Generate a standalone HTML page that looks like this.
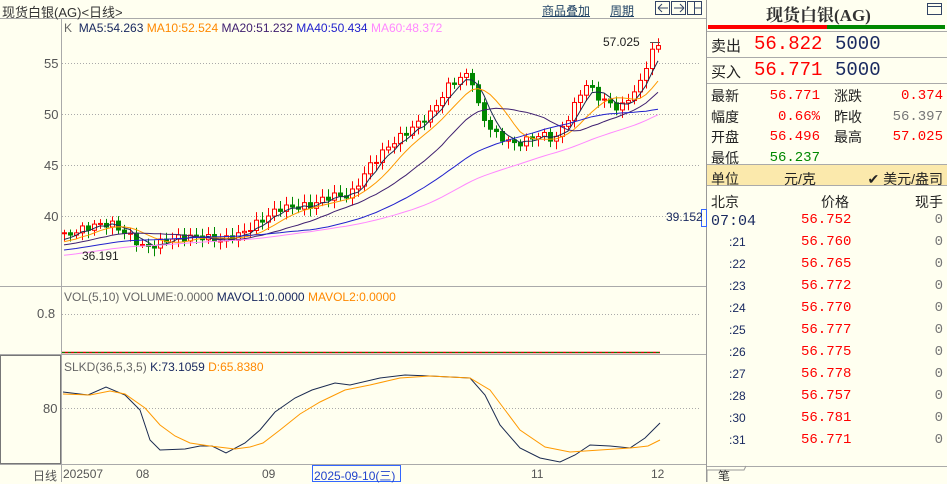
<!DOCTYPE html>
<html><head><meta charset="utf-8"><style>
*{margin:0;padding:0;box-sizing:border-box}
body{width:947px;height:482px;background:#fffff0;font-family:"Liberation Sans","Noto Sans CJK SC",sans-serif;font-size:12px;position:relative;overflow:hidden;color:#333}
.a{position:absolute;white-space:nowrap}
.m{font-family:"Liberation Mono","Noto Sans CJK SC",monospace}
.r{color:#f00}.n{color:#1a2a60}
</style></head><body>
<svg class="a" style="left:0;top:0" width="947" height="482" id="s">
<line x1="0" y1="18.5" x2="706" y2="18.5" stroke="#aaa"/>
<line x1="61.5" y1="18" x2="61.5" y2="482" stroke="#aaa"/>
<line x1="0" y1="286.5" x2="706" y2="286.5" stroke="#aaa"/>
<line x1="0" y1="354.5" x2="706" y2="354.5" stroke="#aaa"/>
<line x1="0" y1="464.5" x2="706" y2="464.5" stroke="#aaa"/>
<rect x="0.5" y="355.5" width="60" height="108" fill="none" stroke="#777"/>
<line x1="706.5" y1="0" x2="706.5" y2="482" stroke="#999"/>
<g stroke="#aaa" stroke-dasharray="1,2">
<line x1="62" y1="63.5" x2="700" y2="63.5"/><line x1="62" y1="114.5" x2="700" y2="114.5"/><line x1="62" y1="165.5" x2="700" y2="165.5"/><line x1="62" y1="216.5" x2="700" y2="216.5"/>
<line x1="62" y1="314.5" x2="700" y2="314.5"/><line x1="62" y1="408.5" x2="700" y2="408.5"/>
</g>
<line x1="62" y1="352.5" x2="660" y2="352.5" stroke="#c00" stroke-width="1.5"/>
<line x1="62" y1="352.5" x2="660" y2="352.5" stroke="#080" stroke-dasharray="3,3"/>
<polyline fill="none" stroke="#1a2a50" stroke-width="1" points="63,392 88,395 106,387 125,395 140,410 150,440 160,450 185,449 200,446 212,446 226,453 245,443 260,430 275,412 295,398 312,390 335,383 350,385 380,378 405,375 430,376 470,378 485,395 500,425 520,448 540,458 560,462 575,455 590,445 610,446 630,448 645,438 660,423"/>
<polyline fill="none" stroke="#f90" stroke-width="1" points="63,394 90,395 110,391 125,394 145,408 160,425 175,436 190,443 210,446 235,449 250,447 263,443 280,430 300,414 320,402 345,390 370,385 400,378 430,376 470,378 490,390 505,410 520,430 545,447 570,452 600,450 630,448 648,446 660,440"/>
<g id="c"></g>
<line x1="650" y1="42.5" x2="660" y2="42.5" stroke="#555"/>
<rect x="708" y="25" width="119" height="4" fill="#f00"/><rect x="827" y="25" width="118" height="4" fill="#080"/>
<line x1="707" y1="31.5" x2="947" y2="31.5" stroke="#aaa"/>
<line x1="707" y1="57.5" x2="947" y2="57.5" stroke="#aaa"/>
<line x1="707" y1="83.5" x2="947" y2="83.5" stroke="#aaa"/>
<rect x="707" y="165" width="240" height="20" fill="#fbe9ac"/>
<line x1="707" y1="164.5" x2="947" y2="164.5" stroke="#aaa"/>
<line x1="707" y1="185.5" x2="947" y2="185.5" stroke="#aaa"/>
<line x1="707" y1="466.5" x2="947" y2="466.5" stroke="#aaa"/>
<path d="M707 482V470h37l2 -4" fill="none" stroke="#999"/>
<rect x="927.5" y="3.5" width="14" height="11" fill="none" stroke="#346"/><line x1="928" y1="6.5" x2="941" y2="6.5" stroke="#346"/>
<g fill="none" stroke="#346"><rect x="655.5" y="1.5" width="14" height="13"/><rect x="671.5" y="1.5" width="14" height="13"/><rect x="687.5" y="1.5" width="14" height="13"/>
<path d="M658 8h10M658 8l4-4M658 8l4 4M658 8"/><path d="M674 8h10M684 8l-4-4M684 8l-4 4"/><path d="M694.5 2v13M695 8h6"/></g>
<rect x="312.5" y="465.5" width="88" height="16" fill="none" stroke="#36f"/>
<rect x="701.5" y="209.5" width="5" height="17" fill="none" stroke="#36f"/>
</svg>
<script>
var k=[[63,38],[90,39],[110,39.3],[130,38],[145,36.8],[170,37.8],[200,38],[220,37.6],[240,38.2],[260,39.5],[280,40.8],[310,41],[330,42],[350,42],[370,45],[390,47],[410,48.5],[430,50],[450,53],[470,54],[480,50],[495,48],[515,47],[540,48],[555,47.5],[570,50],[585,53],[600,51.5],[620,50.5],[640,53],[650,56],[660,56.8]];
function P(x){for(var i=0;i<k.length-1;i++){if(x<=k[i+1][0]){var t=(x-k[i][0])/(k[i+1][0]-k[i][0]);return k[i][1]+t*(k[i+1][1]-k[i][1]);}}return k[k.length-1][1];}
function Y(p){return 63+(55-p)*10.2;}
var xs=[],cl=[];for(var x=64;x<=659;x+=6){xs.push(x);cl.push(P(x)+Math.sin(x*1.7)*0.35);}
var h='',prev=cl[0];
for(var i=0;i<xs.length;i++){var o=prev,c=cl[i],up=c>=o,col=up?'#f00':'#080';var hi=Math.max(o,c)+0.3+Math.abs(Math.sin(i*3.1))*0.5,lo=Math.min(o,c)-0.3-Math.abs(Math.cos(i*2.3))*0.5;
var x=xs[i];h+='<line x1="'+(x+.5)+'" y1="'+Y(hi)+'" x2="'+(x+.5)+'" y2="'+Y(lo)+'" stroke="'+col+'"/>';
var t=Y(Math.max(o,c)),b=Y(Math.min(o,c));if(b-t<1)b=t+1;h+='<rect x="'+(x-1.5)+'" y="'+t+'" width="4" height="'+(b-t)+'" fill="'+(up?'#fffff0':col)+'" stroke="'+col+'" stroke-width="1"/>';prev=c;}
var pre=[];for(var j=0;j<60;j++)pre.push(34+j*0.06);var all=pre.concat(cl);
function ma(n,col){var pts=[];for(var i=0;i<cl.length;i++){var s=0,m=Math.round(n*5/6);for(var j=0;j<m;j++)s+=all[60+i-j];pts.push(xs[i]+','+Y(s/m).toFixed(1));}h+='<polyline fill="none" stroke="'+col+'" points="'+pts.join(' ')+'"/>';}
ma(5,'#1a2a50');ma(10,'#f90');ma(20,'#402070');ma(40,'#22c');ma(60,'#f8f');
document.getElementById('c').innerHTML=h;
</script>
<div class="a" style="left:2px;top:2px;font-size:13px;color:#333">现货白银(AG)&lt;日线&gt;</div>
<div class="a" style="left:64px;top:21px"><span style="color:#666">K</span>&nbsp; <span class="n">MA5:54.263</span> <span style="color:#f80">MA10:52.524</span> <span style="color:#402070">MA20:51.232</span> <span style="color:#22c">MA40:50.434</span> <span style="color:#f8f">MA60:48.372</span></div>
<div class="a" style="left:542px;top:2px;color:#246;text-decoration:underline">商品叠加</div>
<div class="a" style="left:610px;top:2px;color:#246;text-decoration:underline">周期</div>
<div class="a" style="left:603px;top:35px;color:#222">57.025</div>
<div class="a" style="left:82px;top:249px;color:#222">36.191</div>
<div class="a" style="left:44px;top:56px;color:#555;font-size:13px">55</div>
<div class="a" style="left:44px;top:107px;color:#555;font-size:13px">50</div>
<div class="a" style="left:44px;top:158px;color:#555;font-size:13px">45</div>
<div class="a" style="left:44px;top:209px;color:#555;font-size:13px">40</div>
<div class="a" style="left:37px;top:306px;color:#555;font-size:13px">0.8</div>
<div class="a" style="left:43px;top:401px;color:#555;font-size:13px">80</div>
<div class="a" style="left:666px;top:210px;color:#1a2a60">39.152</div>
<div class="a" style="left:64px;top:290px"><span style="color:#666">VOL(5,10) VOLUME:0.0000</span> <span class="n">MAVOL1:0.0000</span> <span style="color:#f80">MAVOL2:0.0000</span></div>
<div class="a" style="left:64px;top:360px"><span style="color:#666">SLKD(36,5,3,5)</span> <span class="n">K:73.1059</span> <span style="color:#f80">D:65.8380</span></div>
<div class="a" style="left:33px;top:467px;color:#555">日线</div>
<div class="a" style="left:63px;top:467px;color:#555">202507</div>
<div class="a" style="left:136px;top:467px;color:#555">08</div>
<div class="a" style="left:262px;top:467px;color:#555">09</div>
<div class="a" style="left:531px;top:467px;color:#555">11</div>
<div class="a" style="left:651px;top:467px;color:#555">12</div>
<div class="a" style="left:314px;top:467px;color:#24c">2025-09-10(三)</div>
<div class="a" style="left:766px;top:1px;font-size:17px;font-weight:bold;color:#333;font-family:'Liberation Serif','Noto Serif CJK SC',serif">现货白银(AG)</div>
<div class="a" style="left:711px;top:35px;font-size:15px;color:#222">卖出</div>
<div class="a m r" style="left:754px;top:33px;font-size:19px">56.822</div>
<div class="a m n" style="left:835px;top:33px;font-size:19px">5000</div>
<div class="a" style="left:711px;top:61px;font-size:15px;color:#222">买入</div>
<div class="a m r" style="left:754px;top:59px;font-size:19px">56.771</div>
<div class="a m n" style="left:835px;top:59px;font-size:19px">5000</div>
<div style="position:absolute;left:711px;top:86px;width:232px;font-size:14px;line-height:20.5px;color:#222">
<div style="position:relative;height:20.5px">最新<span class="a m r" style="right:123px">56.771</span><span class="a" style="left:123px">涨跌</span><span class="a m r" style="right:0">0.374</span></div>
<div style="position:relative;height:20.5px">幅度<span class="a m r" style="right:123px">0.66%</span><span class="a" style="left:123px">昨收</span><span class="a m" style="right:0;color:#777">56.397</span></div>
<div style="position:relative;height:20.5px">开盘<span class="a m r" style="right:123px">56.496</span><span class="a" style="left:123px">最高</span><span class="a m r" style="right:0">57.025</span></div>
<div style="position:relative;height:20.5px">最低<span class="a m" style="right:123px;color:#080">56.237</span></div>
<div style="position:relative;height:20.5px;margin-top:1px">单位<span class="a" style="left:73px">元/克</span><span class="a" style="right:0">✔ 美元/盎司</span></div>
<div style="position:relative;height:20.5px;margin-top:2px">北京<span class="a" style="left:110px">价格</span><span class="a" style="right:0">现手</span></div>
</div>
<div style="position:absolute;left:711px;top:209px;width:232px;line-height:22px;font-size:14px">
<div style="position:relative;height:22px"><span class="m n" style="font-size:15px">07:04</span><span class="a m r" style="left:90px">56.752</span><span class="a m" style="right:0;color:#777">0</span></div>
<div style="position:relative;height:22px"><span class="a n" style="left:18px;font-size:12px">:21</span><span class="a m r" style="left:90px">56.760</span><span class="a m" style="right:0;color:#777">0</span></div>
<div style="position:relative;height:22px"><span class="a n" style="left:18px;font-size:12px">:22</span><span class="a m r" style="left:90px">56.765</span><span class="a m" style="right:0;color:#777">0</span></div>
<div style="position:relative;height:22px"><span class="a n" style="left:18px;font-size:12px">:23</span><span class="a m r" style="left:90px">56.772</span><span class="a m" style="right:0;color:#777">0</span></div>
<div style="position:relative;height:22px"><span class="a n" style="left:18px;font-size:12px">:24</span><span class="a m r" style="left:90px">56.770</span><span class="a m" style="right:0;color:#777">0</span></div>
<div style="position:relative;height:22px"><span class="a n" style="left:18px;font-size:12px">:25</span><span class="a m r" style="left:90px">56.777</span><span class="a m" style="right:0;color:#777">0</span></div>
<div style="position:relative;height:22px"><span class="a n" style="left:18px;font-size:12px">:26</span><span class="a m r" style="left:90px">56.775</span><span class="a m" style="right:0;color:#777">0</span></div>
<div style="position:relative;height:22px"><span class="a n" style="left:18px;font-size:12px">:27</span><span class="a m r" style="left:90px">56.778</span><span class="a m" style="right:0;color:#777">0</span></div>
<div style="position:relative;height:22px"><span class="a n" style="left:18px;font-size:12px">:28</span><span class="a m r" style="left:90px">56.757</span><span class="a m" style="right:0;color:#777">0</span></div>
<div style="position:relative;height:22px"><span class="a n" style="left:18px;font-size:12px">:30</span><span class="a m r" style="left:90px">56.781</span><span class="a m" style="right:0;color:#777">0</span></div>
<div style="position:relative;height:22px"><span class="a n" style="left:18px;font-size:12px">:31</span><span class="a m r" style="left:90px">56.771</span><span class="a m" style="right:0;color:#777">0</span></div>
</div>
<div class="a" style="left:718px;top:467px;color:#333">笔</div>
</body></html>
